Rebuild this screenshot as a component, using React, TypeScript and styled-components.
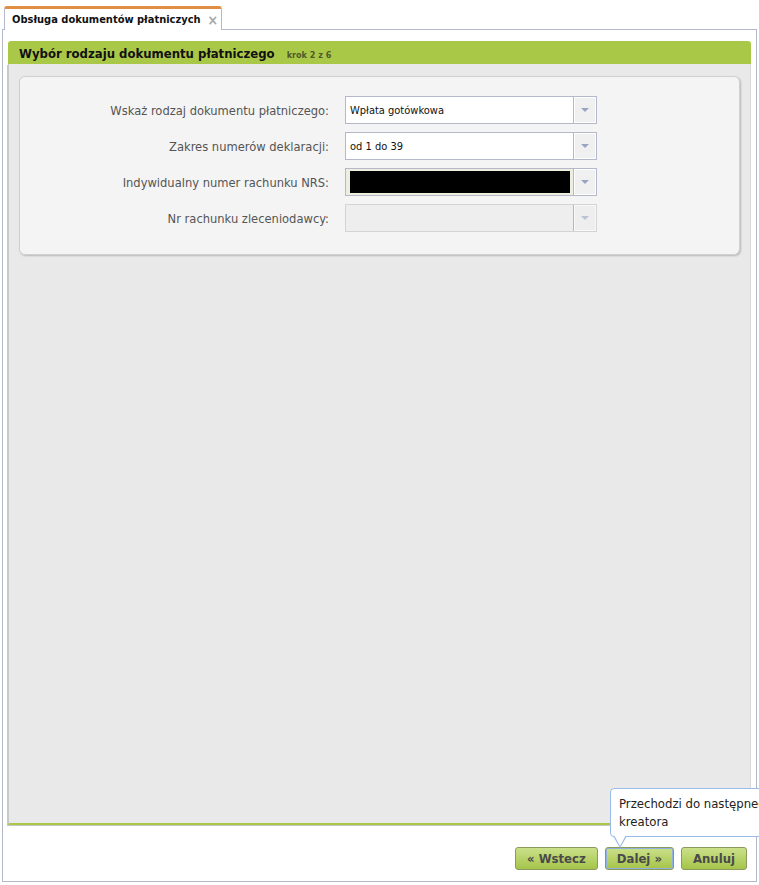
import React from 'react'
import styled, {createGlobalStyle} from 'styled-components'

const GlobalStyle = createGlobalStyle`
  html, body {
    margin: 0;
    padding: 0;
    background: #fff;
  }
  body {
    font-family: Tahoma, "DejaVu Sans Condensed", "Liberation Sans", sans-serif;
    color: #222;
  }
`

type Field = {
    label: string
    value?: string
    variant?: 'normal' | 'masked' | 'disabled'
}

const fields: Field[] = [
    {label: 'Wskaż rodzaj dokumentu płatniczego:', value: 'Wpłata gotówkowa'},
    {label: 'Zakres numerów deklaracji:', value: 'od 1 do 39'},
    {label: 'Indywidualny numer rachunku NRS:', variant: 'masked'},
    {label: 'Nr rachunku zleceniodawcy:', variant: 'disabled'},
]

export default function App() {
    return (
        <>
            <GlobalStyle/>
            <Page>
                <TabStrip>
                    <Tab>
                        Obsługa dokumentów płatniczych
                        <TabClose>×</TabClose>
                    </Tab>
                </TabStrip>
                <Frame>
                    <Panel>
                        <PanelHeader>
                            <Title>Wybór rodzaju dokumentu płatniczego</Title>
                            <Step>krok 2 z 6</Step>
                        </PanelHeader>
                        <PanelBody>
                            <Card>
                                {fields.map(f => (
                                    <Row key={f.label}>
                                        <Label>{f.label}</Label>
                                        <Combo $variant={f.variant ?? 'normal'}>
                                            <ComboText>
                                                {f.variant === 'masked' ? <Mask/> : f.value}
                                            </ComboText>
                                            <Trigger $disabled={f.variant === 'disabled'}>
                                                <Arrow/>
                                            </Trigger>
                                        </Combo>
                                    </Row>
                                ))}
                            </Card>
                        </PanelBody>
                    </Panel>
                    <Footer>
                        <Button>« Wstecz</Button>
                        <Button $focused>Dalej »</Button>
                        <Button>Anuluj</Button>
                    </Footer>
                </Frame>
                <Tooltip>
                    Przechodzi do następnego kroku<br/>kreatora
                </Tooltip>
            </Page>
        </>
    )
}

const Page = styled.div`
  position: relative;
  width: 759px;
  height: 885px;
  overflow: hidden;
`

const TabStrip = styled.div`
  display: flex;
  padding: 6px 0 0 4px;
  height: 23px;
`

const Tab = styled.div`
  position: relative;
  z-index: 1;
  display: flex;
  align-items: center;
  gap: 7px;
  width: 218px;
  height: 24px;
  box-sizing: border-box;
  padding: 0 0 0 7px;
  margin-bottom: -1px;
  background: #fff;
  border: 1px solid #b5b8c8;
  border-top: 3px solid #df8e44;
  border-bottom: none;
  border-radius: 3px 3px 0 0;
  font-size: 11px;
  font-weight: bold;
  color: #111;
`

const TabClose = styled.span`
  color: #a8a8a8;
  font-size: 14px;
  font-weight: bold;
  line-height: 1;
`

const Frame = styled.div`
  margin: 0 2px;
  height: 853px;
  box-sizing: border-box;
  border: 1px solid #b5b8c8;
  padding: 11px 5px 0 5px;
  display: flex;
  flex-direction: column;
`

const Panel = styled.div`
  display: flex;
  flex-direction: column;
  height: 784px;
  width: 743px;
`

const PanelHeader = styled.div`
  display: flex;
  align-items: baseline;
  gap: 12px;
  height: 23px;
  box-sizing: border-box;
  padding: 5px 0 0 11px;
  background: #aac847;
  border-radius: 3px 3px 0 0;
`

const Title = styled.span`
  font-size: 13px;
  font-weight: bold;
  color: #111;
`

const Step = styled.span`
  font-size: 9px;
  font-weight: bold;
  color: #4f5a2a;
`

const PanelBody = styled.div`
  flex: 1;
  background: #e9e9e9;
  border-left: 1px solid #c8c8c8;
  border-right: 1px solid #d8d8d8;
  border-bottom: 2px solid #aac847;
  box-shadow: -1px 1px 0 #c8c8c8;
  padding: 12px 10px 0 10px;
`

const Card = styled.div`
  display: flex;
  flex-direction: column;
  gap: 8px;
  padding: 19px 0 22px 0;
  background: #f4f4f4;
  border: 1px solid #d0d0d0;
  border-radius: 6px;
  box-shadow: 1px 1px 2px #b8b8b8;
`

const Row = styled.div`
  display: grid;
  grid-template-columns: 309px 252px;
  column-gap: 16px;
  align-items: center;
  height: 28px;
`

const Label = styled.div`
  text-align: right;
  font-size: 12.8px;
  color: #555;
`

const Combo = styled.div<{ $variant: 'normal' | 'masked' | 'disabled' }>`
  display: flex;
  height: 28px;
  box-sizing: border-box;
  border: 1px solid ${p => (p.$variant === 'disabled' ? '#d4d4d4' : '#b5b8c8')};
  background: ${p =>
    p.$variant === 'disabled' ? '#eeeeee' : p.$variant === 'masked' ? '#eeeee0' : '#fff'};
`

const ComboText = styled.div`
  flex: 1;
  display: flex;
  align-items: center;
  padding: 0 3px 0 4px;
  font-size: 11px;
  color: #111;
  border-right: 1px solid #b5b8c8;
`

const Mask = styled.div`
  width: 100%;
  height: 22px;
  background: #000;
`

const Trigger = styled.div<{ $disabled?: boolean }>`
  width: 22px;
  display: flex;
  align-items: center;
  justify-content: center;
  background: ${p => (p.$disabled ? '#eeeeee' : '#f0f0f0')};
  box-shadow: inset 1px 1px 0 #fff, inset -1px -1px 0 #fff;
  opacity: ${p => (p.$disabled ? 0.6 : 1)};
`

const Arrow = styled.span`
  width: 0;
  height: 0;
  border-left: 4px solid transparent;
  border-right: 4px solid transparent;
  border-top: 4px solid #9aa5c0;
`

const Footer = styled.div`
  display: flex;
  justify-content: flex-end;
  gap: 7px;
  padding: 22px 4px 0 0;
`

const Button = styled.button<{ $focused?: boolean }>`
  height: 23px;
  padding: 0 11px;
  border: 1px solid #8a9a5c;
  border-radius: 3px;
  background: linear-gradient(#cbe08a, #a5c44a);
  font-family: inherit;
  font-size: 13px;
  font-weight: bold;
  color: #4a4a4a;
  cursor: pointer;
  box-shadow: ${p => (p.$focused ? 'inset 0 0 0 1px #8fb3de' : 'none')};
`

const Tooltip = styled.div`
  position: absolute;
  left: 610px;
  top: 788px;
  width: 170px;
  padding: 6px 0 5px 8px;
  background: #fff;
  border: 1px solid #99bbe8;
  border-radius: 4px;
  font-size: 13px;
  line-height: 18px;
  color: #222;
  white-space: nowrap;

  &::before, &::after {
    content: '';
    position: absolute;
    left: 2px;
    border-left: 7px solid transparent;
    border-right: 7px solid transparent;
  }

  &::before {
    bottom: -12px;
    border-top: 12px solid #99bbe8;
  }

  &::after {
    bottom: -10px;
    left: 3px;
    border-left-width: 6px;
    border-right-width: 6px;
    border-top: 11px solid #fff;
  }
`
